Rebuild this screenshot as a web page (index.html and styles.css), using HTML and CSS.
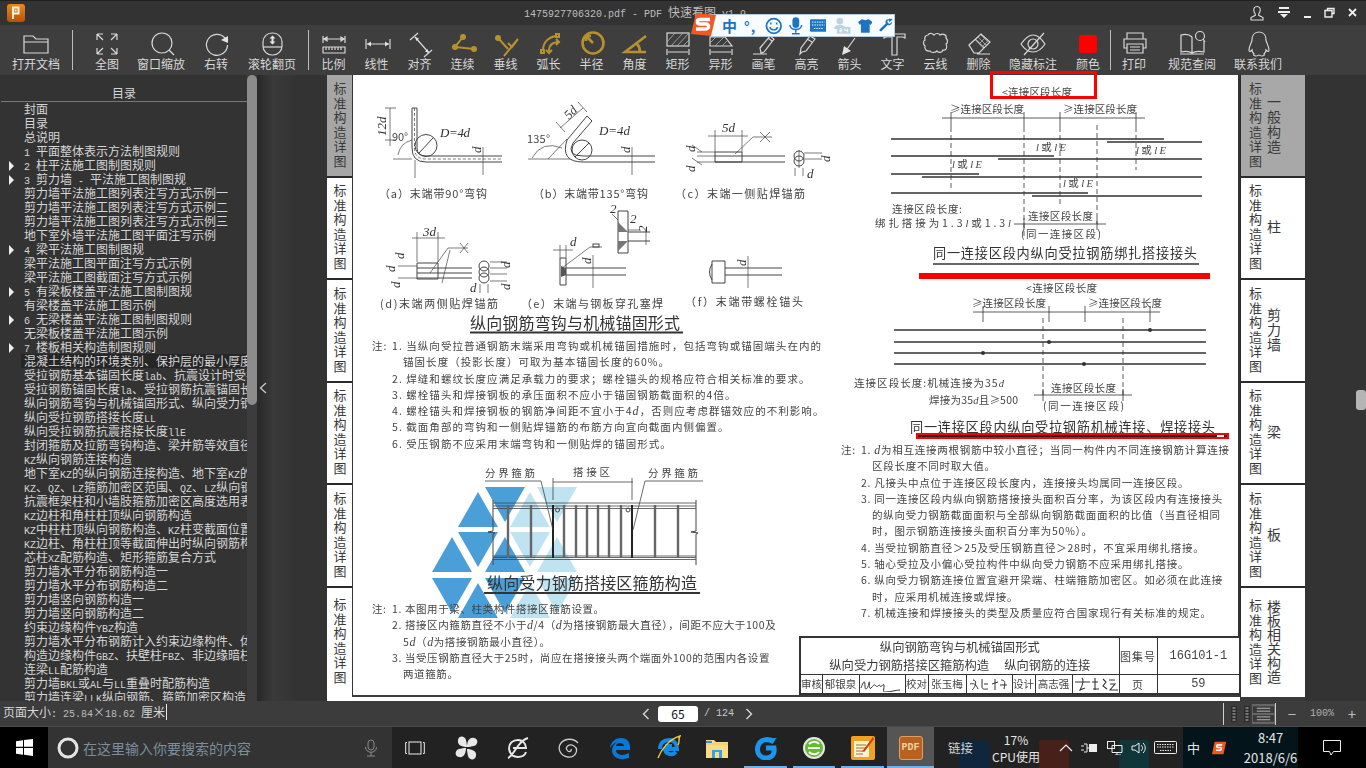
FILE: index.html
```html
<!DOCTYPE html>
<html lang="zh-CN">
<head>
<meta charset="utf-8">
<title>PDF 快速看图</title>
<link rel="stylesheet" href="styles.css">
</head>
<body>
<div class="app">
  <header class="titlebar">
    <svg class="logo" width="18" height="18" viewBox="0 0 18 18"><defs><linearGradient id="lg" x1="0" y1="0" x2="0" y2="1"><stop offset="0" stop-color="#e58a1f"/><stop offset="1" stop-color="#b9500c"/></linearGradient></defs><rect width="18" height="18" rx="3" fill="url(#lg)"/><path d="M6 15V3.5h5.5v6H6M8.5 5.5v2" fill="none" stroke="#fff2d8" stroke-width="2"/></svg>
    <div class="title"><span class="a">1475927706320.pdf - PDF </span>快速看图<span class="a"> v1.9</span></div>
    <div class="winbtns">
      <svg width="16" height="16" viewBox="0 0 16 16"><path d="M8 1.5c-2.4 0-3.6 2-3.2 4.2.2 1.4.8 2.5 1.5 3.3v1.3L2 12.500v2.500h12v-2.500l-4.300-2.200V9c.7-.8 1.300-1.900 1.500-3.300C11.600 3.500 10.400 1.500 8 1.500z" fill="none" stroke="#ddd" stroke-width="1.100"/></svg>
      <svg width="14" height="12" viewBox="0 0 14 12"><path d="M2 1h10" stroke="#eee" stroke-width="2"/><path d="M1 4h12v2H1zM3 7h8l-4 4z" fill="#eee"/></svg>
      <svg width="10" height="12" viewBox="0 0 10 12"><path d="M1 10h7" stroke="#eee" stroke-width="2"/></svg>
      <svg width="11" height="12" viewBox="0 0 11 12"><path d="M3.500 3.500V1.500h6.500v5H8M1 3.500h7v6.500H1z" fill="none" stroke="#eee" stroke-width="1.400"/></svg>
      <svg width="11" height="12" viewBox="0 0 11 12"><path d="M2 2l7 7M9 2l-7 7" stroke="#eee" stroke-width="1.800"/></svg>
    </div>
  </header>

  <nav class="toolbar">
    <div class="tool w-open"><svg class="ic" viewBox="0 0 44 29"><path d="M10 25V8h9l3 3h12v14zM10 14h24"/></svg><span class="lb">打开文档</span></div>
    <i class="sep"></i>
    <div class="tool w54 first"><svg class="ic" viewBox="0 0 44 29"><path d="M12 6h6M12 6v6M12 6l6 6M32 6h-6M32 6v6M32 6l-6 6M12 26h6M12 26v-6M12 26l6-6M32 26h-6M32 26v-6M32 26l-6-6"/></svg><span class="lb">全图</span></div>
    <div class="tool w54"><svg class="ic" viewBox="0 0 44 29"><circle cx="23" cy="15" r="10"/><path d="M30 22l5 5"/></svg><span class="lb">窗口缩放</span></div>
    <div class="tool w56"><svg class="ic" viewBox="0 0 44 29"><path d="M31 10A10.500 10.500 0 1 0 33.500 17"/><path class="fl" d="M27 12l7-4v7z"/></svg><span class="lb">右转</span></div>
    <div class="tool w56"><svg class="ic" viewBox="0 0 44 29"><rect x="13" y="5" width="19" height="22" rx="9"/><path d="M13 19h19"/><path class="fl" d="M22.500 7.500l3 3h-2v3h2l-3 3-3-3h2v-3h-2z"/></svg><span class="lb">滚轮翻页</span></div>
    <i class="sep gap"></i>
    <div class="tool w43 firstm"><svg class="ic" viewBox="0 0 44 29"><path d="M11 8v7M33 8v7M12 11h20M12 11l3-2v4zM32 11l-3-2v4zM11 19h22v6H11zM14 19v3M17 19v3M20 19v3M23 19v3M26 19v3M29 19v3"/></svg><span class="lb">比例</span></div>
    <div class="tool w43"><svg class="ic" viewBox="0 0 44 29"><path d="M11 11v10M35 11v10M12 16h22"/><path class="fl" d="M12 16l4-2.500v5zM34 16l-4-2.500v5z"/></svg><span class="lb">线性</span></div>
    <div class="tool w43"><svg class="ic" viewBox="0 0 44 29"><path d="M12 12l8-7M26 29l8-7M17 9l14 16"/><path class="fl" d="M17 9l4 1.500-2.500 2.500zM31 25l-4-1.500 2.500-2.500z"/></svg><span class="lb">对齐</span></div>
    <div class="tool w43"><svg class="ic gold" viewBox="0 0 44 29"><path d="M22 9l-8 10 19 2"/><circle class="gf" cx="22" cy="9" r="3"/><circle class="gf" cx="14" cy="19" r="3"/><circle class="gf" cx="33" cy="21" r="3"/></svg><span class="lb">连续</span></div>
    <div class="tool w43"><svg class="ic gold" viewBox="0 0 44 29"><circle class="gf" cx="14" cy="10" r="3"/><path d="M14 10l10 11M34 11L20 28M24 15l4 4 4-5"/></svg><span class="lb">垂线</span></div>
    <div class="tool w43"><svg class="ic gold" viewBox="0 0 44 29"><path d="M16 22C16 14 22 9 29 8M22 23c0-6 4-9 10-9M19 22l3 3 3-3M29 11l3 3-3 3"/><rect x="14" y="22" width="3" height="3"/><rect x="29" y="6" width="3" height="3"/></svg><span class="lb">弧长</span></div>
    <div class="tool w43"><svg class="ic gold thick" viewBox="0 0 44 29"><circle cx="23" cy="15" r="10.500"/><path d="M23 15l-6-6M16 13V8h5"/></svg><span class="lb">半径</span></div>
    <div class="tool w43"><svg class="ic gold thick" viewBox="0 0 44 29"><path d="M33 8L12 24h21M24 16c2 2 3 5 3 8"/></svg><span class="lb">角度</span></div>
    <div class="tool w43"><svg class="ic" viewBox="0 0 44 29"><rect x="11" y="5" width="22" height="13"/><path class="hatch" d="M11 14l8-9M15 18L27 5M21 18L33 5M27 18l6-6"/><path d="M11 21v6M33 21v6M12 24h20"/></svg><span class="lb">矩形</span></div>
    <div class="tool w43"><svg class="ic" viewBox="0 0 44 29"><path d="M11 18V9h15l7 9z"/><path class="hatch" d="M11 15l6-6M16 18l9-9M23 18l6-6"/><path d="M11 21v6M33 21v6M12 24h20"/></svg><span class="lb">异形</span></div>
    <div class="tool w43"><svg class="ic" viewBox="0 0 44 29"><path d="M11 26h14M19 25l-1-5L28 8l4 3-10 13zM26 10l4 3"/></svg><span class="lb">画笔</span></div>
    <div class="tool w43"><svg class="ic" viewBox="0 0 44 29"><path d="M15 26l1-6 9-12 5 3-9 12-4 1zM22 11l5 3"/></svg><span class="lb">高亮</span></div>
    <div class="tool w43"><svg class="ic" viewBox="0 0 44 29"><path d="M27 10L17 24"/><path class="fl" d="M14 27l2-9 7 5z"/></svg><span class="lb">箭头</span></div>
    <div class="tool w43"><svg class="ic" viewBox="0 0 44 29"><path d="M13 10V6h21v4l-2-1h-6v18h-5V9h-6z"/></svg><span class="lb">文字</span></div>
    <div class="tool w43"><svg class="ic" viewBox="0 0 44 29"><path d="M14 7c2-3 5-1 6 0 2-2 5-2 6 0 3-2 7 0 6 3 2 2 2 5 0 6 2 3 0 7-3 6-1 3-5 3-6 1-2 2-6 2-7 0-3 1-6-2-5-5-2-2-2-5 0-6-1-3 1-5 3-5z"/></svg><span class="lb">云线</span></div>
    <div class="tool w43"><svg class="ic" viewBox="0 0 44 29"><path d="M12 17L24 6l9 8-11 11h-5zM18 11l9 9M20 26h13"/><path class="hatch" d="M21 9l8 8M24 7l7 7M19 12l7 7M23 15l5-5M26 18l5-5"/></svg><span class="lb">删除</span></div>
    <div class="tool w-hide"><svg class="ic" viewBox="0 0 44 29"><path d="M10 16c5-7 8-9 12-9 5 0 8 3 12 9-4 6-8 8-12 8s-8-2-12-8z"/><circle cx="22" cy="16" r="5"/><path d="M13 27L33 5"/></svg><span class="lb">隐藏标注</span></div>
    <div class="tool w-col"><svg class="ic" viewBox="0 0 44 29"><rect class="red" x="13" y="7" width="18" height="18" rx="3"/></svg><span class="lb">颜色</span></div>
    <i class="sep"></i>
    <div class="tool w-print"><svg class="ic" viewBox="0 0 44 29"><path d="M15 11V5h16v6M15 20h-3v-9h22v9h-3M15 16h16v9H15zM18 19h10M18 22h10"/></svg><span class="lb">打印</span></div>
    <div class="tool w-book"><svg class="ic" viewBox="0 0 44 29"><path d="M22 9c-3-3-7-3-11-2v17c4-1 8-1 11 1 3-2 7-2 12-1V13M22 9v16M10 26h24"/><circle cx="30" cy="8" r="4.500"/><path d="M33 11l2 3"/></svg><span class="lb">规范查阅</span></div>
    <div class="tool w-qq"><svg class="ic" viewBox="0 0 44 29"><path d="M23 4c-5 0-7 4-7 8 0 2-3 6-3 10 0 2 1 2 3 0 0 2 1 3 2 4-1 1 0 2 2 2 2 0 2-1 3-1s1 1 3 1c2 0 3-1 2-2 1-1 2-2 2-4 2 2 3 2 3 0 0-4-3-8-3-10 0-4-2-8-7-8z"/></svg><span class="lb">联系我们</span></div>
  </nav>

  <main class="main">
    <aside class="toc">
      <div class="toc-head">目录</div>
      <div class="row">封面</div>
      <div class="row">目录</div>
      <div class="row">总说明</div>
      <div class="row"><span class="a">1 </span>平面整体表示方法制图规则</div>
      <div class="row has"><span class="a">2 </span>柱平法施工图制图规则</div>
      <div class="row has"><span class="a">3 </span>剪力墙<span class="a"> - </span>平法施工图制图规</div>
      <div class="row">剪力墙平法施工图列表注写方式示例一</div>
      <div class="row">剪力墙平法施工图列表注写方式示例二</div>
      <div class="row">剪力墙平法施工图列表注写方式示例三</div>
      <div class="row">地下室外墙平法施工图平面注写示例</div>
      <div class="row has"><span class="a">4 </span>梁平法施工图制图规</div>
      <div class="row">梁平法施工图平面注写方式示例</div>
      <div class="row">梁平法施工图截面注写方式示例</div>
      <div class="row has"><span class="a">5 </span>有梁板楼盖平法施工图制图规</div>
      <div class="row">有梁楼盖平法施工图示例</div>
      <div class="row has"><span class="a">6 </span>无梁楼盖平法施工图制图规则</div>
      <div class="row">无梁板楼盖平法施工图示例</div>
      <div class="row has"><span class="a">7 </span>楼板相关构造制图规则</div>
      <div class="row sel"><span>混凝土结构的环境类别、保护层的最小厚度要求</span></div>
      <div class="row">受拉钢筋基本锚固长度<span class="a">lab</span>、抗震设计时受拉钢筋</div>
      <div class="row">受拉钢筋锚固长度<span class="a">la</span>、受拉钢筋抗震锚固长度</div>
      <div class="row">纵向钢筋弯钩与机械锚固形式、纵向受力钢筋</div>
      <div class="row">纵向受拉钢筋搭接长度<span class="a">LL</span></div>
      <div class="row">纵向受拉钢筋抗震搭接长度<span class="a">llE</span></div>
      <div class="row">封闭箍筋及拉筋弯钩构造、梁并筋等效直径</div>
      <div class="row"><span class="a">KZ</span>纵向钢筋连接构造</div>
      <div class="row">地下室<span class="a">KZ</span>的纵向钢筋连接构造、地下室<span class="a">KZ</span>的</div>
      <div class="row"><span class="a">KZ</span>、<span class="a">QZ</span>、<span class="a">LZ</span>箍筋加密区范围、<span class="a">QZ</span>、<span class="a">LZ</span>纵向钢筋</div>
      <div class="row">抗震框架柱和小墙肢箍筋加密区高度选用表</div>
      <div class="row"><span class="a">KZ</span>边柱和角柱柱顶纵向钢筋构造</div>
      <div class="row"><span class="a">KZ</span>中柱柱顶纵向钢筋构造、<span class="a">KZ</span>柱变截面位置</div>
      <div class="row"><span class="a">KZ</span>边柱、角柱柱顶等截面伸出时纵向钢筋构造</div>
      <div class="row">芯柱<span class="a">XZ</span>配筋构造、矩形箍筋复合方式</div>
      <div class="row">剪力墙水平分布钢筋构造一</div>
      <div class="row">剪力墙水平分布钢筋构造二</div>
      <div class="row">剪力墙竖向钢筋构造一</div>
      <div class="row">剪力墙竖向钢筋构造二</div>
      <div class="row">约束边缘构件<span class="a">YBZ</span>构造</div>
      <div class="row">剪力墙水平分布钢筋计入约束边缘构件、体</div>
      <div class="row">构造边缘构件<span class="a">GBZ</span>、扶壁柱<span class="a">FBZ</span>、非边缘暗柱</div>
      <div class="row">连梁<span class="a">LL</span>配筋构造</div>
      <div class="row">剪力墙<span class="a">BKL</span>或<span class="a">AL</span>与<span class="a">LL</span>重叠时配筋构造</div>
      <div class="row">剪力墙连梁<span class="a">LLK</span>纵向钢筋、箍筋加密区构造</div>
    </aside>
    <div class="toc-scroll"><div class="toc-thumb"></div></div>
    <div class="gutter"><svg width="8" height="12" viewBox="0 0 8 12"><path d="M7 1L1.500 6 7 11" fill="none" stroke="#ccc" stroke-width="1.300"/></svg></div>

    <div class="tabs tabs-l">
      <div class="tab on"><span class="v">标准构造详图</span></div>
      <div class="tab"><span class="v">标准构造详图</span></div>
      <div class="tab"><span class="v">标准构造详图</span></div>
      <div class="tab"><span class="v">标准构造详图</span></div>
      <div class="tab"><span class="v">标准构造详图</span></div>
      <div class="tab"><span class="v">标准构造详图</span></div>
    </div>

    <section class="page">
      <div class="sheet">
        <div class="col col-l">
          <svg class="watermark" width="160" height="140" viewBox="425 484 160 140">
            <g fill="#4b9fd9"><path d="M478 492l-20 35h40zM485 487h40l-20 35zM452 537l-20 35h40zM458 532h40l-20 35zM505 537l-20 35h40zM432 578h40l-20 35zM478 583l-20 35h40zM485 578h40l-20 35z"/></g>
            <g fill="#bfe3f1"><path d="M530 492l-20 35h40zM537 487h40l-20 35zM510 532h40l-20 35zM557 537l-20 35h40zM537 578h40l-20 35zM530 583l-20 35h40z"/></g>
          </svg>
          <svg class="fig" width="478" height="263" viewBox="352 75 478 263">
            <g fill="none" stroke="#444" stroke-width="1">
              <path d="M412 108V148Q412 162 426 162H502M417 108V148Q417 156 426 156H502M412 108H417"/>
              <path class="thin" d="M414.500 108V148Q414.500 159 426 159H502" stroke-dasharray="3 2"/>
              <circle cx="426" cy="145.500" r="11"/><path d="M419 153L433 138"/>
              <path class="thin" d="M393 159H412M415 160V178M483 147V175M390 108V146M385 108H396M385 140H396"/>
              <path class="thin" d="M398 155Q400 143 412 140"/>
              <path d="M587 116L567 140Q560 162 583 162H655M592 121L573 143Q566 156 583 156H655M587 116L592 121"/>
              <circle cx="582" cy="150" r="10"/><path d="M575 157L589 143"/>
              <path class="thin" d="M528 159H570M548 159L567 139M532 158Q542 140 562 148M632 147V175M560 128L583 108M556 122L565 132M578 102L587 112"/>
              <path d="M715 152H742V162H715zM715 156H785M715 162H785"/>
              <path class="thin" d="M735 154L753 137H772M760 132L770 142M770 132L760 142M708 136H748M715 130V152M742 130V152M697 152H715M697 156H715M697 162H715M692 145L702 152M692 158L702 165M799 150V168"/>
              <circle cx="799" cy="156" r="5"/><circle cx="799" cy="161" r="5"/>
              <path class="thin" d="M804 153H822M804 159H822M795 168V176M803 168V176"/>
              <path d="M417 263H438V279H417zM417 268H472M417 278H472M417 273H472" />
              <path class="thin" d="M457 248H468M430 273L448 248H457M442 283L450 250M460 243L468 253M468 243L460 253M412 238H445M417 232V262M438 232V262M398 266H417M398 278H417"/>
              <circle cx="484" cy="266" r="5"/><circle cx="484" cy="272" r="5"/><circle cx="484" cy="278" r="5"/>
              <path class="thin" d="M490 262H507M490 268H507M490 274H507M490 281H507M480 284V293M488 284V293"/>
              <path d="M560 258H566V285H560zM566 268H626M566 275H626"/>
              <path class="thin" d="M562 268L590 247H602M553 250H573M560 245V258M566 245V258M593 255V288"/>
              <rect x="593" y="244" width="6" height="3"/>
              <path d="M618 211H628V253H618zM628 232H650M628 241H650"/>
              <path class="thin" d="M646 228V245M612 214L618 220M640 230H628"/>
              <path d="M712 261H725V283H712zM725 268H782M725 275H782M712 264Q707 272 712 280"/>
              <path class="thin" d="M748 256V288"/>
            </g>
            <path d="M561 266l5 2v7l-5 2zM562 278l4-2" fill="#555"/>
            <path d="M618 222l10 10h-10zM618 251l10-10h-10z" fill="#777"/>
            <g class="it">
              <text transform="translate(386 136) rotate(-90)">12<tspan>d</tspan></text>
              <text x="440" y="137" textLength="30">D=4d</text>
              <text transform="translate(481 153) rotate(-90)">d</text>
              <text x="599" y="135" textLength="31">D=4d</text>
              <text transform="translate(569 120) rotate(-45)">5d</text>
              <text transform="translate(630 153) rotate(-90)">d</text>
              <text x="722" y="132">5d</text>
              <text transform="translate(695 152) rotate(-90)">d</text>
              <text transform="translate(695 172) rotate(-90)">d</text>
              <text transform="translate(830 162) rotate(-90)">d</text>
              <text x="807" y="178">d</text>
              <text x="423" y="236">3d</text>
              <text transform="translate(395 272) rotate(-90)">d</text>
              <text transform="translate(404 259) rotate(-90)">d</text>
              <text transform="translate(400 288) rotate(-90)">d</text>
              <text transform="translate(510 268) rotate(-90)">d</text>
              <text transform="translate(510 290) rotate(-90)">d</text>
              <text x="470" y="292">d</text>
              <text x="570" y="246">d</text>
              <text transform="translate(591 264) rotate(-90)">d</text>
              <text x="610" y="213">2</text>
              <text x="630" y="223">2</text>
              <text transform="translate(647 232) rotate(-90)">2</text>
              <text transform="translate(746 266) rotate(-90)">d</text>
            </g>
            <g class="tx">
              <text x="392" y="141" textLength="16">90°</text>
              <text x="527" y="143" textLength="23">135°</text>
              <text x="379" y="198" textLength="108">（a）末端带90°弯钩</text>
              <text x="533" y="198" textLength="115">（b）末端带135°弯钩</text>
              <text x="675" y="198" textLength="130">（c）末端一侧贴焊锚筋</text>
              <text x="380" y="308" textLength="118">(d)末端两侧贴焊锚筋</text>
              <text x="521" y="308" textLength="142">（e）末端与钢板穿孔塞焊</text>
              <text x="685" y="306" textLength="118">（f）末端带螺栓锚头</text>
            </g>
            <text class="ttl" x="470" y="329" textLength="210">纵向钢筋弯钩与机械锚固形式</text>
            <path d="M470 332.500H683" stroke="#333" stroke-width="2"/>
          </svg>
          <div class="notes n1">
            <p class="z"><b>注:</b>1. 当纵向受拉普通钢筋末端采用弯钩或机械锚固措施时，包括弯钩或锚固端头在内的</p>
            <p class="c">锚固长度（投影长度）可取为基本锚固长度的60%。</p>
            <p>2. 焊缝和螺纹长度应满足承载力的要求；螺栓锚头的规格应符合相关标准的要求。</p>
            <p>3. 螺栓锚头和焊接钢板的承压面积不应小于锚固钢筋截面积的4倍。</p>
            <p>4. 螺栓锚头和焊接钢板的钢筋净间距不宜小于4<em>d</em>，否则应考虑群锚效应的不利影响。</p>
            <p>5. 截面角部的弯钩和一侧贴焊锚筋的布筋方向宜向截面内侧偏置。</p>
            <p>6. 受压钢筋不应采用末端弯钩和一侧贴焊的锚固形式。</p>
          </div>
          <svg class="fig" width="478" height="145" viewBox="352 452 478 145">
            <g fill="none" stroke="#444">
              <path d="M493 503H696M493 506H696M493 508.500H696M493 556H696M493 557.500H696M493 559.500H696" stroke-width=".8"/>
              <path d="M493 500V531l-5 1 7 1-2 1V565M696 500V531l-5 1 7 1-2 1V565"/>
              <path d="M508 505V558M531 505V558M564 505V558M576 505V558M587 505V558M598 505V558M609 505V558M621 505V558M655 505V558M678 505V558" stroke="#666" stroke-width="2.400"/>
              <path d="M553 505V558M632 505V558" stroke="#222" stroke-width="2"/>
              <circle cx="557.500" cy="510" r="2"/><circle cx="628" cy="510" r="2"/>
              <path d="M485 481H541L553 530M645 481H703M645 481L633 530M553 482H633M553 478V500M632 478V500" stroke-width=".8"/>
            </g>
            <g class="tx big">
              <text x="485" y="477" textLength="50">分界箍筋</text>
              <text x="573" y="476" textLength="37">搭接区</text>
              <text x="648" y="477" textLength="50">分界箍筋</text>
            </g>
            <text class="ttl" x="487" y="589" textLength="210">纵向受力钢筋搭接区箍筋构造</text>
            <path d="M484 593H700" stroke="#333" stroke-width="2"/>
          </svg>
          <div class="notes n2">
            <p class="z"><b>注:</b>1. 本图用于梁、柱类构件搭接区箍筋设置。</p>
            <p>2. 搭接区内箍筋直径不小于<em>d</em>/4（<em>d</em>为搭接钢筋最大直径），间距不应大于100及</p>
            <p class="c">5<em>d</em>（<em>d</em>为搭接钢筋最小直径）。</p>
            <p>3. 当受压钢筋直径大于25时，尚应在搭接接头两个端面外100的范围内各设置</p>
            <p class="c">两道箍筋。</p>
          </div>
        </div>

        <div class="col col-r">
          <svg class="fig" width="408" height="367" viewBox="830 75 408 367">
            <g fill="none" stroke="#333">
              <path d="M892 139H1165M1108 142H1203M892 156H1055M999 159H1203M892 174H980M923 177H1203M892 193H1089M1033 196H1203M895 330H1207M895 342H1207M895 353H1207M895 364H1207" stroke-width="1.500"/>
              <g stroke-width=".8">
                <path d="M943 118H1146M952 112V127M1025 112V127M1061 112V127M1137 112V127M1015 224H1107M1025 218V230M1098 218V230M974 312H1161M984 306V322M1050 306V322M1086 306V322M1151 306V322M1035 395H1133M1044 389V401M1124 389V401"/>
                <path d="M952 127V188M1025 127V236M1061 127V204M1098 125V224M1137 127V170M1044 318V396M1124 318V396" stroke-dasharray="5 3"/>
              </g>
            </g>
            <g fill="#333"><circle cx="1151" cy="330" r="2"/><circle cx="1050" cy="342" r="2"/><circle cx="984" cy="353" r="2"/><circle cx="1085" cy="364" r="2"/></g>
            <g class="tx big">
              <text x="1003" y="96" textLength="70">&lt;连接区段长度</text>
              <text x="951" y="113" textLength="74">≥连接区段长度</text>
              <text x="1064" y="113" textLength="74">≥连接区段长度</text>
              <text x="893" y="213" textLength="70">连接区段长度:</text>
              <text x="876" y="227" textLength="136">绑扎搭接为1.3<tspan class="ii">l</tspan>或1.3<tspan class="ii">l</tspan></text>
              <text x="1029" y="220" textLength="65">连接区段长度</text>
              <text x="1022" y="238" textLength="80">(同一连接区段)</text>
              <text x="1027" y="292" textLength="71">&lt;连接区段长度</text>
              <text x="973" y="307" textLength="74">≥连接区段长度</text>
              <text x="1089" y="307" textLength="74">≥连接区段长度</text>
              <text x="855" y="387" textLength="150">连接区段长度:机械连接为35<tspan class="ii">d</tspan></text>
              <text x="930" y="404" textLength="89">焊接为35<tspan class="ii">d</tspan>且≥500</text>
              <text x="1052" y="392" textLength="65">连接区段长度</text>
              <text x="1044" y="410" textLength="81">(同一连接区段)</text>
              <text x="1037" y="151" textLength="30"><tspan class="ii">l</tspan>或<tspan class="ii">lE</tspan></text>
              <text x="1137" y="154" textLength="30"><tspan class="ii">l</tspan>或<tspan class="ii">lE</tspan></text>
              <text x="953" y="168" textLength="30"><tspan class="ii">l</tspan>或<tspan class="ii">lE</tspan></text>
              <text x="1064" y="187" textLength="30"><tspan class="ii">l</tspan>或<tspan class="ii">lE</tspan></text>
            </g>
            <text class="ttl md" x="934" y="258" textLength="264">同一连接区段内纵向受拉钢筋绑扎搭接接头</text>
            <path d="M934 264H1200" stroke="#333" stroke-width="1.500"/>
            <text class="ttl md" x="911" y="432" textLength="305">同一连接区段内纵向受拉钢筋机械连接、焊接接头</text>
          </svg>
          <div class="notes n3">
            <p class="z"><b>注:</b>1. <em>d</em>为相互连接两根钢筋中较小直径；当同一构件内不同连接钢筋计算连接</p>
            <p class="c">区段长度不同时取大值。</p>
            <p>2. 凡接头中点位于连接区段长度内，连接接头均属同一连接区段。</p>
            <p>3. 同一连接区段内纵向钢筋搭接接头面积百分率，为该区段内有连接接头</p>
            <p class="c">的纵向受力钢筋截面面积与全部纵向钢筋截面面积的比值（当直径相同</p>
            <p class="c">时，图示钢筋连接接头面积百分率为50%）。</p>
            <p>4. 当受拉钢筋直径＞25及受压钢筋直径＞28时，不宜采用绑扎搭接。</p>
            <p>5. 轴心受拉及小偏心受拉构件中纵向受力钢筋不应采用绑扎搭接。</p>
            <p>6. 纵向受力钢筋连接位置宜避开梁端、柱端箍筋加密区。如必须在此连接</p>
            <p class="c">时，应采用机械连接或焊接。</p>
            <p>7. 机械连接和焊接接头的类型及质量应符合国家现行有关标准的规定。</p>
          </div>
          <table class="stamp">
            <colgroup><col class="c22"><col class="c37"><col class="c46"><col class="c23"><col class="c38"><col class="c46"><col class="c23"><col class="c37"><col class="c47"><col class="c38"><col class="c83"></colgroup>
            <tr class="r1">
              <td colspan="9" class="main-t"><div>纵向钢筋弯钩与机械锚固形式</div><div>纵向受力钢筋搭接区箍筋构造　 纵向钢筋的连接</div></td>
              <td class="lab">图集号</td><td class="no">16G101-1</td>
            </tr>
            <tr class="r2">
              <td>审核</td><td>郁银泉</td>
              <td><svg width="44" height="16" viewBox="0 0 44 16"><path d="M1 12c3-8 4-8 4-2s3 2 4-3-1 8 2 5 3-4 5-2 3-3 4 0 4-5 4 0-2 6 2 6 10-2 14-2" fill="none" stroke="#333"/></svg></td>
              <td>校对</td><td>张玉梅</td>
              <td><svg width="44" height="16" viewBox="0 0 44 16"><path d="M6 4c5 0 2 8-1 10M3 8c4-1 6 0 8 5M15 3v8c0 3 4 2 6 2M17 8h4M28 3v11M25 8l6-2M34 4c3 0 5 1 3 9M33 9h7" fill="none" stroke="#333"/></svg></td>
              <td>设计</td><td>高志强</td>
              <td><svg width="44" height="16" viewBox="0 0 44 16"><path d="M1 6h15M8 2c3 3-1 10-2 12l5-2M18 6h6M21 2v12M19 13h6M29 3l3 3-3 4 4 3M35 4h6M36 8h5l-5 6h8" fill="none" stroke="#333" stroke-width="1.100"/></svg></td>
              <td class="lab">页</td><td class="no">59</td>
            </tr>
          </table>
        </div>
        <div class="mark box"></div>
        <div class="mark bar1"></div>
        <div class="mark bar2"></div>
      </div>
    </section>

    <div class="tabs tabs-r">
      <div class="tab on"><span class="v">标准构造详图</span><span class="v n-4">一般构造</span></div>
      <div class="tab"><span class="v">标准构造详图</span><span class="v">柱</span></div>
      <div class="tab"><span class="v">标准构造详图</span><span class="v n-3">剪力墙</span></div>
      <div class="tab"><span class="v">标准构造详图</span><span class="v">梁</span></div>
      <div class="tab"><span class="v">标准构造详图</span><span class="v">板</span></div>
      <div class="tab"><span class="v">标准构造详图</span><span class="v n-6">楼板相关构造</span></div>
    </div>
    <div class="rgutter"><div class="r-thumb"></div></div>
  </main>

  <footer class="status">
    <div class="st-left"><span>页面大小</span><span class="a">: </span><span class="a dim">25.84</span><span class="dim">×</span><span class="a dim">18.62 </span><span>厘米</span><i class="caret"></i></div>
    <div class="st-mid">
      <svg width="8" height="12" viewBox="0 0 8 12"><path d="M6.500 1L1.500 6l5 5" fill="none" stroke="#ddd" stroke-width="1.300"/></svg>
      <span class="pgbox">65</span>
      <span class="a pgt">/ 124</span>
      <svg width="8" height="12" viewBox="0 0 8 12"><path d="M1.500 1l5 5-5 5" fill="none" stroke="#ddd" stroke-width="1.300"/></svg>
    </div>
    <div class="st-right">
      <div class="views">
        <svg class="v1" width="22" height="18" viewBox="0 0 22 18"><path d="M1 1h6v16H1zM14 1h6v16h-6z" fill="#2c2c2c"/><path d="M2.500 3h3M2.500 6h3M2.500 9h3M2.500 12h3M2.500 15h3M15.500 3h3M15.500 6h3M15.500 9h3M15.500 12h3M15.500 15h3" stroke="#bbb"/></svg>
        <span class="v2"><svg width="24" height="16" viewBox="0 0 24 16"><path d="M1 0h22v7H1zM1 9h22v7H1z" fill="#3a3a3a"/><path d="M5 2h14M5 5h14M5 11h14M5 14h14" stroke="#bbb"/></svg></span>
      </div>
      <span class="zb">−</span><span class="a zp">100%</span><span class="zb">+</span>
    </div>
  </footer>

  <div class="taskbar">
    <div class="start"><svg width="17" height="17" viewBox="0 0 17 17"><path d="M0 2.300l7-1v6.500H0zM8 1.100L17 0v7.800H8zM0 9h7v6.700l-7-1zM8 9h9v8l-9-1.200z" fill="#fff"/></svg></div>
    <div class="search">
      <svg width="22" height="22" viewBox="0 0 22 22"><circle cx="11" cy="11" r="9" fill="none" stroke="#e5e5e5" stroke-width="3"/></svg>
      <span class="ph">在这里输入你要搜索的内容</span>
      <svg class="mic" width="14" height="18" viewBox="0 0 14 18"><rect x="4" y="1" width="6" height="10" rx="3" fill="none" stroke="#8a8a8a"/><path d="M1.500 8c0 7 11 7 11 0M7 13v4M3 17h8" fill="none" stroke="#8a8a8a"/></svg>
    </div>
    <div class="tv"><svg width="20" height="14" viewBox="0 0 20 14"><path d="M2 1.500H.7v11H2M18 1.500h1.300v11H18" fill="none" stroke="#eee"/><rect x="4" y="1" width="12" height="12" fill="none" stroke="#eee"/></svg></div>
    <div class="apps">
      <span class="ap"><svg width="26" height="26" viewBox="0 0 26 26"><g fill="#e8e8e8"><path d="M13 12C8 12 3 10 4 5s7-4 8 0c.5 2.500 1 5 1 7zM13 12c0-5 2-10 7-9s4 7 0 8c-2.500.5-5 1-7 1zM13 14c5 0 10 2 9 7s-7 4-8 0c-.5-2.500-1-5-1-7zM12 13c0 5-2 10-7 9s-4-7 0-8c2.500-.5 5-1 7-1z"/></g></svg></span>
      <span class="ap"><svg width="24" height="24" viewBox="0 0 24 24"><path d="M3 13c0-6 4-9 9-9 4 0 8 3 8 8H7M20 16c-1 3-4 5-8 5-5 0-8-3-9-8M2 22c3-1 7-8 10-12s6-7 10-8" fill="none" stroke="#e8e8e8" stroke-width="2"/></svg></span>
      <span class="ap"><svg width="22" height="22" viewBox="0 0 22 22"><path d="M20 6C16 1 7 1 3 6s-1 13 7 14 11-8 6-11-9 1-7 4 5 1 4-1" fill="none" stroke="#ccc" stroke-width="1.300"/></svg></span>
      <span class="ap"><svg width="24" height="24" viewBox="0 0 24 24"><path d="M2 12C3 5 8 2 13 2c6 0 9 4 9 9v3H8c0 4 5 7 13 3v5c-9 3-17 0-17-8 0-3 2-6 5-8-3 1-5 3-7 6zM8 10h8c0-4-8-4-8 0z" fill="#0a78d7" fill-rule="evenodd"/></svg></span>
      <span class="ap"><svg width="24" height="26" viewBox="0 0 24 26"><path d="M3 14c0-6 4-9 9-9s8 4 8 9H8c0 5 7 7 11 3M8 11h7" fill="none" stroke="#1b88e0" stroke-width="4"/><path d="M1 23C4 15 12 4 23 1c-2 3 0 6-2 9" fill="none" stroke="#f1c93b" stroke-width="1.400"/></svg></span>
      <span class="ap"><svg width="22" height="20" viewBox="0 0 22 20"><path d="M0 2h8l2 2h12v16H0z" fill="#f8dc87"/><path d="M0 6h22" stroke="#eac45a"/><path d="M6 12h10v8H6z" fill="#3aa1e8"/><path d="M9 14h4v6H9z" fill="#f8dc87"/><path d="M0 3h6v2H0z" fill="#2c8fd8"/></svg></span>
      <span class="ap"><svg width="24" height="24" viewBox="0 0 24 24"><path d="M20 6C15 2 6 3 4 10s2 12 8 12 9-4 8-10h-8" fill="none" stroke="#1c95ea" stroke-width="5"/><path d="M15 2l8 0-5 4z" fill="#1c95ea"/></svg></span>
      <span class="ap"><svg width="24" height="24" viewBox="0 0 24 24"><circle cx="12" cy="12" r="10" fill="#63bc2b" stroke="#e6e6e6" stroke-width="2"/><path d="M6 12h12M7 8c3-3 8-3 10 0M7 16c3 3 8 3 10 0" fill="none" stroke="#fff" stroke-width="2"/></svg></span>
      <span class="ap"><svg width="24" height="24" viewBox="0 0 24 24"><rect width="24" height="24" rx="2" fill="#f2a222"/><path d="M3 5h15v16H3z" fill="#fff2cf"/><path d="M5 9h10M5 12h10M5 15h9M5 18h7" stroke="#a86a2a"/><path d="M22 1L13 13l-2 3 3-1L23 3z" fill="#c43d17"/></svg></span>
      <span class="ap act"><span class="pdf">PDF</span></span>
    </div>
    <div class="ghosts"><i class="g1"></i><i class="g2"></i><i class="g3"></i></div>
    <span class="link">链接</span>
    <div class="cpu"><span>17%</span><span>CPU使用</span></div>
    <div class="tray">
      <svg width="14" height="8" viewBox="0 0 14 8"><path d="M1 7l6-6 6 6" fill="none" stroke="#eee" stroke-width="1.200"/></svg>
      <svg width="17" height="14" viewBox="0 0 17 14"><path d="M0 5h3M0 9h3M3 3h3v8H3M6 7h2" stroke="#eee" fill="none"/><rect x="8" y="3" width="8" height="8" fill="#eee"/></svg>
      <svg width="16" height="14" viewBox="0 0 16 14"><rect x=".5" y=".5" width="7" height="7" fill="none" stroke="#eee"/><path d="M5 4.500h10v7H5zM8 14h6M10 11.500V14" fill="none" stroke="#eee"/></svg>
      <svg width="15" height="14" viewBox="0 0 15 14"><path d="M1 5h3l4-3v10L4 9H1zM10 4c2 2 2 4 0 6M12 2c3 3 3 7 0 10" fill="none" stroke="#eee"/></svg>
      <svg width="23" height="13" viewBox="0 0 23 13"><rect x=".5" y=".5" width="22" height="12" rx="1" fill="none" stroke="#eee"/><path d="M3 3.500h17M3 6h17M6 9.500h11" stroke="#eee" stroke-dasharray="1.500 1"/></svg>
    </div>
    <div class="clockzone">
      <span class="ime">中</span>
      <svg width="16" height="16" viewBox="0 0 16 16"><path d="M3 1h13l-3 14H0z" fill="#ef5a1c"/><path d="M11.500 4.500H6.500C5 4.500 5 7.500 6.500 7.500h3c1.500 0 1.500 3-.5 3H4.500" fill="none" stroke="#fff" stroke-width="1.800"/></svg>
      <div class="clock"><span>8:47</span><span>2018/6/6</span></div>
    </div>
    <div class="notify"><svg width="18" height="16" viewBox="0 0 18 16"><path d="M.5.500h17v11h-7L8 15l-1.500-3.500h-6z" fill="none" stroke="#eee"/></svg></div>
  </div>

  <div class="ime-bar">
    <svg class="ime-s" width="27" height="27" viewBox="0 0 27 27"><path d="M6 2L26 4 21 25 1 23z" fill="#ee5a1f"/><path d="M20 8.500H10C6.500 8.500 6.500 13 10 13h6c3.500 0 3.500 5-.5 5H6" fill="none" stroke="#fff" stroke-width="3.400"/></svg>
    <div class="ime-in">
      <span class="zh">中</span><span class="pu">°,</span>
      <svg width="18" height="18" viewBox="0 0 18 18"><circle cx="9" cy="9" r="7.500" fill="none" stroke="#1b74c4" stroke-width="1.800"/><path d="M5 10c1 4 7 4 8 0" fill="none" stroke="#1b74c4" stroke-width="1.500"/><path d="M6 5.500v2M12 5.500v2" stroke="#1b74c4" stroke-width="1.500"/></svg>
      <svg width="14" height="18" viewBox="0 0 14 18"><rect x="3.500" y="0" width="7" height="11" rx="3.500" fill="#1b74c4"/><path d="M1 8c0 6 12 6 12 0M7 13v3M3 17h8" fill="none" stroke="#1b74c4" stroke-width="1.500"/></svg>
      <svg width="17" height="13" viewBox="0 0 17 13"><rect width="17" height="13" rx="1" fill="#1b74c4"/><path d="M2 3h13M2 6h13M4 9.500h9" stroke="#fff" stroke-dasharray="1.500 1"/></svg>
      <svg width="18" height="17" viewBox="0 0 18 17"><circle cx="7" cy="4" r="3.500" fill="#bcd3e6"/><path d="M1 12c0-3 3-4 6-4s6 1 6 4z" fill="#bcd3e6"/><rect x="4" y="10" width="14" height="7" fill="#bcd3e6"/><path d="M7 12h2v1.500H7V15h2M12 12v1.500h3M15 12v3.500" stroke="#fff" fill="none"/></svg>
      <svg width="15" height="14" viewBox="0 0 15 14"><path d="M4 0l3.500 1L11 0l4 3-2 3-1-1v9H3V5L2 6 0 3z" fill="#1b74c4"/></svg>
      <svg width="15" height="15" viewBox="0 0 15 15"><path d="M14 1l-3 3-1-1-.5-2C12 0 14 1 14 1zM9.500 1C7 1 6 3.500 7 5.500L1 11c-1.500 1.500.5 3.500 2 2l6-6c2 1 4.500-.5 4.500-3l-3 2-2-2z" fill="#1b74c4"/></svg>
    </div>
  </div>
</div>
</body>
</html>
```

FILE: styles.css
```css
* { box-sizing: border-box; }
html, body { margin: 0; padding: 0; }
body { width: 1366px; height: 768px; overflow: hidden; background: #222; font-family: "Noto Sans CJK SC", sans-serif; font-size: 12px; line-height: 14px; color: #d6d6d6; }
.app { position: relative; width: 1366px; height: 768px; display: flex; flex-direction: column; }
.a { font-family: "Liberation Mono", monospace; font-size: 10px; white-space: pre; }

.titlebar { height: 25px; flex: none; background: #333; border-top: 1px solid #1f1f1f; display: flex; align-items: center; color: #bdbdbd; }
.logo { margin: -1px 0 0 7px; flex: none; }
.title { margin-left: 499px; white-space: nowrap; }
.winbtns { margin-left: auto; display: flex; align-items: center; width: 117px; justify-content: space-between; padding-right: 8px; }

.toolbar { height: 50px; flex: none; background: #3e3e3e; display: flex; align-items: flex-start; position: relative; }
.tool { flex: none; height: 50px; padding-top: 3px; display: flex; flex-direction: column; align-items: center; }
.ic { width: 44px; height: 29px; flex: none; overflow: visible; fill: none; stroke: #d8d8d8; stroke-width: 1.200; }
.ic .fl { fill: #e4e4e4; stroke: none; }
.ic .hatch { stroke-width: .8; stroke: #b5b5b5; }
.ic.gold { stroke: #b8912f; stroke-width: 2; }
.ic.thick { stroke-width: 2.600; }
.ic .gf { fill: #b8912f; stroke: none; }
.ic .red { fill: #f00; stroke: none; }
.lb { height: 14px; line-height: 14px; white-space: nowrap; color: #d8d8d8; }
.sep { flex: none; width: 1px; height: 40px; margin-top: 5px; background: #bdbdbd; }
.sep.gap { margin-left: 8px; }
.w-open { width: 72px; }
.w54 { width: 54px; }
.w56 { width: 56px; }
.first { margin-left: 7px; }
.w43 { width: 43px; }
.firstm { margin-left: 3px; }
.w-hide { width: 60px; margin-left: 3px; }
.w-col { width: 44px; margin-left: 3px; }
.w-print { width: 46px; }
.w-book { width: 56px; margin-left: 7px; }
.w-qq { width: 56px; margin-left: 10px; }

.main { height: 626px; flex: none; display: flex; background: #333; }
.toc { width: 247px; flex: none; overflow: hidden; background: #333; }
.toc-head { height: 27px; padding: 11px 0 0; text-align: center; border-bottom: 1px solid #787878; margin-left: 1px; line-height: 14px; }
.row { height: 14px; line-height: 14px; padding-left: 24px; white-space: nowrap; }
.row.has::before { content: ""; display: inline-block; vertical-align: -1px; width: 0; height: 0; margin-left: -15px; margin-right: 10px; border-left: 5px solid #eee; border-top: 5px solid transparent; border-bottom: 5px solid transparent; }
.row.sel { padding-left: 21px; }
.row.sel span { display: block; background: #262626; padding-left: 3px; }
.toc-scroll { width: 10px; flex: none; background: #3c3c3c; }
.toc-thumb { height: 330px; background: #8c8c8c; border-radius: 5px; }
.gutter { width: 70px; flex: none; display: flex; align-items: center; padding-left: 2px; background: linear-gradient(90deg, #282828 0, #3a3a3a 16px, #333 40px); }

.tabs { flex: none; display: flex; flex-direction: column; height: 626px; background: #fff; color: #333; }
.tabs-l { width: 25px; padding-bottom: 5px; }
.tabs-r { width: 65px; padding-bottom: 4px; background: #3a3a3a; }
.tab { flex: none; height: 102.500px; display: flex; align-items: center; justify-content: center; background: #fff; border-bottom: 2px solid #2b2b2b; gap: 4px; }
.tabs-l .tab:first-child { background: #a6a6a6; }
.tabs-l .tab:last-child { flex: 1; border-bottom: 0; height: auto; }
.tabs-r .tab { border-left: 1px solid #2b2b2b; justify-content: flex-start; padding-left: 7px; }
.tabs-r .tab:first-child { background: #a8a8a8; }
.tabs-r .tab:last-child { flex: 1; height: auto; border-bottom: 0; }
.v { writing-mode: vertical-rl; text-orientation: upright; font-size: 13px; line-height: 14px; letter-spacing: 1.500px; white-space: nowrap; color: #3a3a3a; }
.tabs-r .tab .v + .v { font-size: 14px; margin-left: 1px; }
.tabs-r .tab .n-4 { letter-spacing: 1px; }
.tabs-r .tab .n-3 { letter-spacing: 1px; }
.tabs-r .tab .n-6 { letter-spacing: 0; font-size: 13.500px; }

.page { width: 888px; flex: none; height: 626px; background: #fff; padding-bottom: 4px; }
.sheet { position: relative; height: 622px; display: flex; border-left: 1px solid #333; border-right: 2px solid #333; border-bottom: 2px solid #3c3c3c; }
.col { flex: none; display: flex; flex-direction: column; position: relative; filter: blur(.3px); }
.col-l { width: 477px; margin-left: -1px; }
.col-r { width: 408px; }
.fig { display: block; flex: none; overflow: visible; position: relative; }
.thin { stroke-width: .7; }
.watermark { position: absolute; left: 73px; top: 409px; }
.it text { font: italic 13px "Liberation Serif", serif; fill: #333; }
.tx text { font: 11px "Noto Sans CJK SC", sans-serif; fill: #444; }
.tx.big text { font-size: 10.500px; }
.ii { font-family: "Liberation Serif", serif; font-style: italic; }
.ttl { font: 16px "Noto Sans CJK SC", sans-serif; fill: #333; }
.ttl.md { font-size: 13.200px; }
.notes { flex: none; position: relative; color: #444; font-size: 10.500px; line-height: 16.300px; }
.notes p { margin: 0; white-space: nowrap; text-indent: -11px; }
.notes p.c { text-indent: 0; }
.notes p.z { text-indent: -31px; }
.notes b { font-weight: 400; display: inline-block; width: 20px; text-indent: 0; }
.notes em { font-family: "Liberation Serif", serif; font-size: 12px; }
.n1 { padding-left: 51px; letter-spacing: 1.050px; }
.n2 { padding-left: 51px; margin-top: 4px; letter-spacing: .6px; }
.n3 { padding-left: 43px; letter-spacing: .75px; }
.stamp { position: relative; border-collapse: collapse; table-layout: fixed; width: 440px; margin: auto 0 0 -30px; color: #444; font-size: 10.500px; line-height: 12px; border: 2px solid #333; background: #fff; }
.stamp td { border: 1px solid #333; padding: 0; text-align: center; white-space: nowrap; overflow: hidden; }
.r1 { height: 36px; }
.r2 { height: 20px; }
.main-t { font-size: 12.300px; line-height: 18px; color: #3b3b3b; }
.lab { font-size: 11px; letter-spacing: 1px; }
.no { font: 12px "Liberation Mono", monospace; }
.stamp svg { display: block; margin: 0 auto; }
.c22 { width: 22px; } .c23 { width: 23px; } .c37 { width: 37px; } .c38 { width: 38px; } .c46 { width: 46px; } .c47 { width: 47px; } .c83 { width: 83px; }
.mark { position: absolute; z-index: 5; }
.box { left: 637px; top: -4px; width: 107px; height: 28px; border: 3px solid #f00; }
.bar1 { left: 566px; top: 198px; width: 291px; height: 6px; background: #f00; }
.bar2 { left: 563px; top: 358px; width: 313px; height: 6px; background: #222; border: 2px solid #f00; }
.bar2::after { content: ""; position: absolute; right: 3px; top: 0; width: 7px; height: 2px; background: #fff; }

.rgutter { flex: 1; background: #333; display: flex; justify-content: flex-end; padding-top: 315px; }
.r-thumb { width: 10px; height: 20px; background: #b5b5b5; border-radius: 3px; }

.status { height: 26px; flex: none; background: #3c3c3c; display: flex; align-items: center; border-bottom: 1px solid #4a4a4a; }
.st-left { width: 642px; padding-left: 3px; line-height: 16px; white-space: nowrap; }
.dim { color: #bcbcbc; }
.caret { display: inline-block; vertical-align: -3px; width: 1px; height: 16px; background: #e8e8e8; margin-left: 1px; }
.st-mid { display: flex; align-items: center; }
.pgbox { width: 40px; height: 16px; margin: 0 6px 0 8px; background: #fff; border-radius: 3px; color: #111; text-align: center; line-height: 16px; }
.pgt { color: #c8c8c8; font-size: 10px; margin-right: 11px; }
.st-right { margin-left: auto; display: flex; align-items: center; height: 22px; }
.views { width: 53px; height: 22px; border-left: 1px solid #cfcfcf; border-right: 1px solid #cfcfcf; display: flex; align-items: center; justify-content: space-between; padding-left: 6px; }
.v2 { width: 23px; height: 20px; background: #666; display: flex; align-items: center; justify-content: center; }
.zb { font-size: 15px; color: #bbb; width: 30px; text-align: center; line-height: 16px; }
.zp { width: 30px; text-align: center; color: #b0b0b0; }
.st-right .zb:first-of-type { margin-left: 1px; }
.st-right .zb:last-child { margin-right: -1px; }

.taskbar { position: relative; height: 41px; flex: 1; background: #222; display: flex; align-items: center; color: #e6e6e6; }
.start { width: 48px; height: 100%; background: #000; display: flex; align-items: center; justify-content: center; }
.search { width: 344px; height: 100%; background: #333; display: flex; align-items: center; padding-left: 9px; }
.ph { margin-left: 4px; font-size: 14px; line-height: 16px; color: #7a8e9e; white-space: nowrap; }
.mic { margin-left: auto; margin-right: 14px; }
.tv { width: 50px; flex: none; display: flex; justify-content: center; padding-right: 4px; }
.apps { width: 492px; height: 100%; flex: none; display: grid; grid-template-columns: 50px 51px 51px 51px 48px 48px 49px 48px 49px 47px; }
.ap { display: flex; align-items: center; justify-content: center; position: relative; }
.ap:nth-child(7)::after, .ap:nth-child(8)::after, .ap:nth-child(9)::after, .ap:nth-child(10)::after { content: ""; position: absolute; left: 3px; right: 3px; bottom: 0; height: 2px; background: #6fb2ea; }
.ap.act { background: #555; }
.ap.act::after { left: 0; right: 0; }
.pdf { width: 24px; height: 24px; border-radius: 3px; background: #b9611e; border: 1px solid #e0a060; color: #f0d0a0; font: 700 10px "Liberation Mono", monospace; line-height: 22px; text-align: center; overflow: hidden; }
.ghosts i { position: absolute; top: 13px; bottom: 0; width: 30px; border-radius: 3px 3px 0 0; }
.g1 { left: 959px; background: #10263c; }
.g2 { left: 1039px; background: #48201a; }
.g3 { left: 1119px; background: #11363a; }
.link { position: relative; margin-left: 14px; width: 32px; font-size: 12.500px; color: #d0d0d0; }
.cpu { position: relative; width: 54px; margin-left: 9px; margin-right: 16px; display: flex; flex-direction: column; align-items: center; line-height: 17px; font-size: 12px; white-space: nowrap; }
.tray { position: relative; width: 118px; display: flex; align-items: center; justify-content: space-between; }
.clockzone { margin-left: 6px; width: 115px; height: 100%; flex: none; background: #03151b; display: flex; align-items: center; }
.ime { margin-left: 4px; font-size: 13px; }
.clockzone > svg { margin-left: 12px; }
.clock { margin-left: 17px; display: flex; flex-direction: column; align-items: center; line-height: 20px; font-size: 13px; width: 62px; white-space: nowrap; }
.notify { flex: 1; height: 100%; background: #000; display: flex; align-items: center; justify-content: center; }

.ime-bar { position: absolute; left: 690px; top: 11px; z-index: 9; display: flex; align-items: flex-start; }
.ime-s { position: relative; z-index: 2; flex: none; }
.ime-in { margin: 3px 0 0 -7px; width: 185px; height: 23px; background: #f8fcff; border: 1px solid #b7cde0; display: flex; align-items: center; padding-left: 11px; gap: 7px; }
.zh { font-size: 15px; font-weight: 700; color: #1b74c4; line-height: 16px; }
.pu { font-size: 14px; font-weight: 700; color: #1b74c4; line-height: 14px; width: 14px; letter-spacing: 1px; }
```
